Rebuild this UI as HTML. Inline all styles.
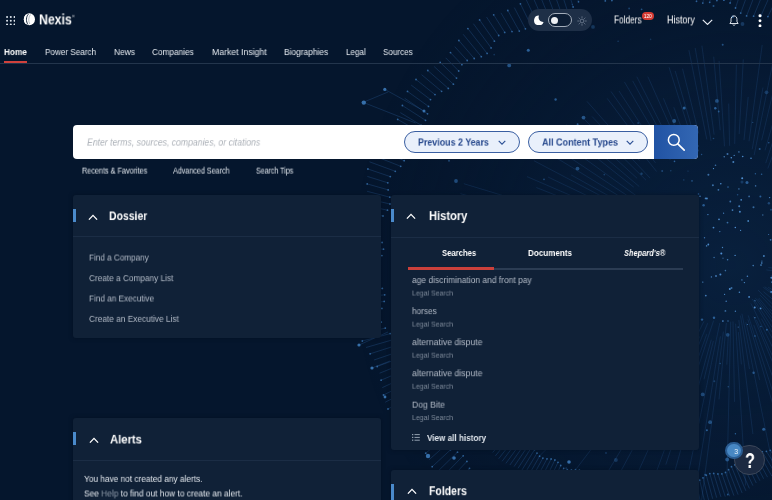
<!DOCTYPE html>
<html><head><meta charset="utf-8">
<style>
*{box-sizing:border-box;margin:0;padding:0}
html,body{width:772px;height:500px;overflow:hidden}
body{background:#05162d;font-family:"Liberation Sans",sans-serif;color:#fff;position:relative}
.a{position:absolute}
#w{position:absolute;left:0;top:0;width:772px;height:500px;overflow:hidden;filter:blur(0.35px)}
#bg{position:absolute;left:0;top:0;width:772px;height:500px}
.t{position:absolute;white-space:nowrap;line-height:1;transform-origin:0 0;will-change:transform}
.panel{position:absolute;background:#102137;border-radius:3px;box-shadow:0 0 4px rgba(4,14,28,.6)}
.bar{position:absolute;width:2.8px;height:13.2px;background:#4a8acb}
.hr{position:absolute;height:1px;background:#1b2d45}
.pill{position:absolute;height:21.6px;border:1.5px solid #3a5fa2;border-radius:11px;background:#e9f0fb}
</style></head><body>
<div id="w">
<svg id="bg" viewBox="0 0 772 500"><defs><radialGradient id="glow" cx="732" cy="265" r="380" gradientUnits="userSpaceOnUse"><stop offset="0" stop-color="#0b2748" stop-opacity="0.6"/><stop offset="0.5" stop-color="#092140" stop-opacity="0.35"/><stop offset="1" stop-color="#05162d" stop-opacity="0"/></radialGradient></defs><rect width="772" height="500" fill="url(#glow)"/><path d="M768.3 267.6L924.1 278.6M766.3 269.9L910.8 290.4M770.8 275.4L813.1 286.8M770.8 281.3L849.5 314.5M767.9 287.0L837.2 329.5M764.7 286.8L828.3 329.1M763.3 287.4L893.8 380.9M763.5 291.7L796.8 320.0M758.0 290.1L864.3 393.1M760.2 295.1L814.6 352.9M769.7 308.5L895.3 453.6M758.9 298.1L823.4 377.6M757.6 298.8L777.4 325.0M755.4 298.0L871.3 461.7M754.3 299.6L873.3 484.8M752.2 298.8L797.5 374.5M761.4 318.6L858.2 494.9M750.9 303.4L803.0 408.9M756.3 319.7L843.7 516.1M753.5 316.4L773.8 365.1M753.8 325.1L809.5 478.0M748.2 315.4L802.4 483.9M747.9 319.3L777.5 420.4M745.8 322.3L759.6 379.9M741.9 313.7L777.7 489.7M740.5 315.6L749.5 369.1M738.8 320.0L752.9 434.0M738.4 332.1L741.4 364.4M735.6 323.7L745.6 485.5M733.0 321.5L734.5 401.8M730.7 321.7L727.0 476.3M728.4 333.6L726.8 364.7M726.4 323.0L719.0 399.4M723.4 331.6L694.5 555.2M720.4 336.3L687.7 536.7M719.8 323.0L679.5 515.5M713.4 340.9L704.0 379.3M711.3 339.7L665.9 503.4M713.6 320.6L665.8 464.6M706.8 334.1L634.6 531.3M707.7 323.2L660.4 436.7M699.5 336.6L625.2 500.6M703.9 321.4L681.4 366.6M693.0 337.3L608.2 494.6M697.3 322.8L594.6 493.9M685.1 337.2L652.7 387.1M687.2 329.3L608.2 442.6M683.7 328.2L554.4 497.5M677.6 332.4L622.2 401.0M684.9 318.8L665.0 341.6M677.9 322.2L558.3 448.6M667.3 329.2L538.6 456.9M671.6 320.5L577.5 406.9M674.7 313.4L561.2 409.4M673.5 310.5L590.6 374.9M667.3 311.7L518.0 419.3M656.3 315.6L554.5 383.7M657.6 311.2L496.6 411.2M661.4 305.6L544.4 372.9M656.3 304.2L620.1 323.1M641.7 308.4L509.8 371.8M651.9 300.1L487.3 372.3M649.7 297.4L517.5 349.6M639.1 297.3L490.3 349.1M640.1 293.0L600.5 305.0M639.9 289.0L558.3 310.2M634.0 287.6L546.8 307.7M636.1 283.5L547.1 300.7M640.3 278.6L575.0 288.3M639.0 275.8L565.1 284.4M630.8 273.2L418.9 290.2M634.8 267.9L490.6 272.2M644.5 265.3L569.9 265.6M625.4 260.4L461.1 253.3M639.4 258.6L526.5 250.8M621.6 251.8L512.3 238.8M625.9 249.5L488.7 229.4M623.7 244.5L503.3 221.7M632.9 243.3L433.9 199.8M635.0 239.5L460.4 193.7M625.5 232.7L463.8 183.7M623.6 228.4L552.0 204.2M618.3 220.0L536.3 187.5M623.7 218.3L527.0 176.6M621.3 212.0L548.0 177.0M629.1 210.8L534.1 160.8M619.8 202.1L571.1 174.9M622.9 198.4L550.7 154.4M627.8 196.0L562.1 152.4M638.4 197.3L561.4 141.7M633.7 187.1L565.8 133.4M639.3 186.6L566.3 124.7M637.1 178.3L586.9 132.4M646.0 180.2L582.1 117.1M650.1 178.1L592.1 116.5M639.6 160.7L587.0 101.4M656.6 171.5L633.3 142.5M655.5 162.9L607.2 98.4M654.3 153.6L611.0 91.5M660.3 154.5L619.0 91.0M670.3 160.0L624.4 81.9M671.5 152.8L632.7 80.9M670.7 143.7L636.8 76.7M680.1 148.9L647.9 76.7M683.1 146.2L663.4 98.3M687.4 144.1L673.8 107.3M693.7 144.8L669.1 67.4M693.1 132.2L675.2 71.0M698.8 133.5L682.5 68.7M706.8 139.4L688.9 50.2M711.0 140.9L695.2 48.0M714.1 134.7L701.9 45.7M720.2 130.2L713.7 56.7M724.5 146.3L719.1 61.1M729.6 145.8L728.7 103.6M734.7 143.9L736.4 64.6M739.2 134.1L743.3 59.4M744.0 140.1L748.2 96.9M749.0 141.3L762.2 44.9M752.2 149.3L763.0 87.4M754.1 155.3L775.4 49.6M761.6 140.4L782.8 51.0M765.0 150.4L792.0 57.0M765.7 163.2L789.0 92.4M767.8 168.5L795.4 94.2" stroke="#24528c" stroke-opacity="0.45" stroke-width="0.6" fill="none"/><path d="M780.7 506.7L788.9 521.9M773.6 507.7L783.4 526.9M766.2 507.5L777.9 531.9M759.5 508.6L772.1 536.6M538.0 507.4L525.5 534.5M531.5 505.8L518.3 532.7M524.1 505.9L511.5 530.0M516.9 505.1L505.3 526.1M511.0 501.9L499.7 521.2M506.7 496.1L494.5 515.8M503.0 489.7L489.5 510.2M498.4 484.8L484.5 505.0M492.2 482.2L479.0 500.4M484.9 481.0L472.9 496.6M477.9 479.0L466.4 493.4M472.8 474.7L459.5 490.4M469.5 468.3L452.7 487.2M466.9 461.4L446.4 483.3M463.2 455.8L440.8 478.6M457.5 452.2L436.1 473.0M450.5 449.8L432.2 466.7M444.0 446.6L428.9 459.9M439.7 441.5L425.7 453.2M437.6 434.6L422.3 446.8M436.2 427.3L418.2 440.9M433.4 421.2L413.4 435.6M428.4 416.7L408.0 430.7M421.9 413.1L402.3 425.9M416.1 408.9L396.7 420.8M412.7 403.1L391.9 415.2M411.9 395.9L388.0 409.0M411.7 388.5L385.3 402.2M410.0 382.0L383.5 395.0M405.7 376.8L382.3 387.6M399.9 372.2L381.1 380.2M395.0 367.0L379.6 373.2M392.7 360.7L377.2 366.5M393.1 353.5L374.0 360.0M394.2 346.1L370.1 353.8M393.6 339.5L366.0 347.5M390.2 333.6L362.3 341.0M385.3 328.1L359.4 334.2M381.3 322.1L357.6 327.1M380.2 315.5L357.1 319.8M381.9 308.4L357.6 312.4M384.2 301.4L358.6 304.9M384.7 294.8L359.5 297.6M382.3 288.4L359.9 290.4M378.3 282.1L359.5 283.3M375.5 275.5L358.1 276.2M375.6 268.8L356.1 269.1M378.5 262.2L354.0 261.9M381.9 255.6L352.4 254.6M383.5 249.2L351.7 247.3M382.1 242.5L352.2 240.0M379.3 235.6L354.0 232.8M377.7 228.7L356.7 225.9M379.0 222.1L359.8 219.0M383.0 216.0L362.7 212.3M387.5 210.2L365.1 205.5M390.0 204.0L366.5 198.5M389.8 197.2L367.1 191.3M388.2 189.9L367.2 183.9M387.8 182.8L367.3 176.4M390.3 176.6L367.9 169.0M395.3 171.3L369.5 161.8M400.7 166.3L372.2 155.0M404.2 160.7L376.1 148.7M405.1 153.9L380.8 142.9M404.8 146.5L385.7 137.2M405.6 139.4L390.4 131.6M409.1 133.7L394.5 125.7M415.0 129.3L397.7 119.4M421.2 125.3L400.3 112.6M425.5 120.3L402.4 105.5M427.5 113.8L404.7 98.3M428.5 106.4L407.5 91.4M430.5 99.6L411.2 85.1M435.0 94.6L416.0 79.5M441.6 91.3L421.6 74.7M448.3 88.4L427.8 70.5M453.4 84.2L434.1 66.5M456.5 78.1L440.2 62.4M458.7 71.0L445.7 57.8M461.9 64.7L450.5 52.6M467.2 60.5L454.8 46.7M474.2 58.5L458.9 40.5M481.3 56.7L463.2 34.3M487.1 53.4L467.9 28.6M491.1 47.9L473.4 23.7M494.4 41.2L479.6 19.9M498.7 35.5L486.5 17.0M504.7 32.4L493.7 14.8M512.0 31.6L500.9 12.8M519.3 31.1L507.8 10.5M525.4 28.8L514.3 7.6M530.3 23.9L520.4 3.8M534.8 17.9L526.1 -0.6M540.0 13.1L531.8 -5.4M546.4 11.1L537.7 -10.1M553.7 11.6L544.0 -14.1M561.0 12.3L550.7 -17.0M567.5 11.0L557.8 -18.7M573.1 7.0L565.2 -19.4M578.5 1.8L572.7 -19.4M584.4 -2.0L580.2 -19.3M591.1 -2.7L587.4 -19.6M598.3 -1.0L594.5 -20.7M605.3 0.9L601.3 -22.7M611.9 0.6L608.2 -25.4M618.1 -2.4L615.0 -28.4M624.3 -6.5L622.0 -31.1M630.8 -9.2L629.2 -33.0M637.6 -8.8L636.4 -33.7M644.3 -5.9L643.8 -33.1M650.9 -2.8L651.0 -31.5M657.5 -2.0L658.2 -29.3M664.1 -4.0L665.3 -27.1M670.9 -7.0L672.3 -25.4M677.8 -8.5L679.4 -24.6M684.3 -6.9L686.6 -24.6M690.5 -2.8L693.9 -25.3M696.5 1.3L701.4 -26.2M702.8 3.1L708.8 -26.8M709.7 2.3L716.2 -26.4M716.9 0.5L723.3 -24.8M723.9 0.2L730.1 -22.0M730.1 3.0L736.6 -18.3M735.5 8.0L742.8 -14.1M740.7 13.1L749.0 -10.0M746.6 15.9L755.3 -6.5M753.6 16.2L761.9 -3.8M761.0 15.7L768.8 -1.9M767.9 16.6L776.1 -0.5M773.5 20.5L783.5 0.8M777.9 26.4L790.7 2.5" stroke="#2f66a3" stroke-opacity="0.5" stroke-width="0.6" fill="none"/><g fill="#3f7fc0" fill-opacity="0.7"><circle cx="780.7" cy="506.7" r="0.9"/><circle cx="788.9" cy="521.9" r="0.9"/><circle cx="773.6" cy="507.7" r="0.9"/><circle cx="766.2" cy="507.5" r="0.9"/><circle cx="777.9" cy="531.9" r="0.9"/><circle cx="759.5" cy="508.6" r="0.9"/><circle cx="538.0" cy="507.4" r="0.9"/><circle cx="525.5" cy="534.5" r="0.9"/><circle cx="531.5" cy="505.8" r="0.9"/><circle cx="524.1" cy="505.9" r="0.9"/><circle cx="511.5" cy="530.0" r="0.9"/><circle cx="516.9" cy="505.1" r="0.9"/><circle cx="511.0" cy="501.9" r="0.9"/><circle cx="499.7" cy="521.2" r="0.9"/><circle cx="506.7" cy="496.1" r="0.9"/><circle cx="503.0" cy="489.7" r="0.9"/><circle cx="489.5" cy="510.2" r="0.9"/><circle cx="498.4" cy="484.8" r="0.9"/><circle cx="492.2" cy="482.2" r="0.9"/><circle cx="479.0" cy="500.4" r="0.9"/><circle cx="484.9" cy="481.0" r="0.9"/><circle cx="477.9" cy="479.0" r="0.9"/><circle cx="466.4" cy="493.4" r="0.9"/><circle cx="472.8" cy="474.7" r="0.9"/><circle cx="469.5" cy="468.3" r="0.9"/><circle cx="452.7" cy="487.2" r="0.9"/><circle cx="466.9" cy="461.4" r="0.9"/><circle cx="463.2" cy="455.8" r="0.9"/><circle cx="440.8" cy="478.6" r="0.9"/><circle cx="457.5" cy="452.2" r="0.9"/><circle cx="450.5" cy="449.8" r="0.9"/><circle cx="432.2" cy="466.7" r="0.9"/><circle cx="444.0" cy="446.6" r="0.9"/><circle cx="439.7" cy="441.5" r="0.9"/><circle cx="425.7" cy="453.2" r="0.9"/><circle cx="437.6" cy="434.6" r="0.9"/><circle cx="436.2" cy="427.3" r="0.9"/><circle cx="418.2" cy="440.9" r="0.9"/><circle cx="433.4" cy="421.2" r="0.9"/><circle cx="428.4" cy="416.7" r="0.9"/><circle cx="408.0" cy="430.7" r="0.9"/><circle cx="421.9" cy="413.1" r="0.9"/><circle cx="416.1" cy="408.9" r="0.9"/><circle cx="396.7" cy="420.8" r="0.9"/><circle cx="412.7" cy="403.1" r="0.9"/><circle cx="411.9" cy="395.9" r="0.9"/><circle cx="388.0" cy="409.0" r="0.9"/><circle cx="411.7" cy="388.5" r="0.9"/><circle cx="410.0" cy="382.0" r="0.9"/><circle cx="383.5" cy="395.0" r="0.9"/><circle cx="405.7" cy="376.8" r="0.9"/><circle cx="399.9" cy="372.2" r="0.9"/><circle cx="381.1" cy="380.2" r="0.9"/><circle cx="395.0" cy="367.0" r="0.9"/><circle cx="392.7" cy="360.7" r="0.9"/><circle cx="377.2" cy="366.5" r="0.9"/><circle cx="393.1" cy="353.5" r="0.9"/><circle cx="394.2" cy="346.1" r="0.9"/><circle cx="370.1" cy="353.8" r="0.9"/><circle cx="393.6" cy="339.5" r="0.9"/><circle cx="390.2" cy="333.6" r="0.9"/><circle cx="362.3" cy="341.0" r="0.9"/><circle cx="385.3" cy="328.1" r="0.9"/><circle cx="381.3" cy="322.1" r="0.9"/><circle cx="357.6" cy="327.1" r="0.9"/><circle cx="380.2" cy="315.5" r="0.9"/><circle cx="381.9" cy="308.4" r="0.9"/><circle cx="357.6" cy="312.4" r="0.9"/><circle cx="384.2" cy="301.4" r="0.9"/><circle cx="384.7" cy="294.8" r="0.9"/><circle cx="359.5" cy="297.6" r="0.9"/><circle cx="382.3" cy="288.4" r="0.9"/><circle cx="378.3" cy="282.1" r="0.9"/><circle cx="359.5" cy="283.3" r="0.9"/><circle cx="375.5" cy="275.5" r="0.9"/><circle cx="375.6" cy="268.8" r="0.9"/><circle cx="356.1" cy="269.1" r="0.9"/><circle cx="378.5" cy="262.2" r="0.9"/><circle cx="381.9" cy="255.6" r="0.9"/><circle cx="352.4" cy="254.6" r="0.9"/><circle cx="383.5" cy="249.2" r="0.9"/><circle cx="382.1" cy="242.5" r="0.9"/><circle cx="352.2" cy="240.0" r="0.9"/><circle cx="379.3" cy="235.6" r="0.9"/><circle cx="377.7" cy="228.7" r="0.9"/><circle cx="356.7" cy="225.9" r="0.9"/><circle cx="379.0" cy="222.1" r="0.9"/><circle cx="383.0" cy="216.0" r="0.9"/><circle cx="362.7" cy="212.3" r="0.9"/><circle cx="387.5" cy="210.2" r="0.9"/><circle cx="390.0" cy="204.0" r="0.9"/><circle cx="366.5" cy="198.5" r="0.9"/><circle cx="389.8" cy="197.2" r="0.9"/><circle cx="388.2" cy="189.9" r="0.9"/><circle cx="367.2" cy="183.9" r="0.9"/><circle cx="387.8" cy="182.8" r="0.9"/><circle cx="390.3" cy="176.6" r="0.9"/><circle cx="367.9" cy="169.0" r="0.9"/><circle cx="395.3" cy="171.3" r="0.9"/><circle cx="400.7" cy="166.3" r="0.9"/><circle cx="372.2" cy="155.0" r="0.9"/><circle cx="404.2" cy="160.7" r="0.9"/><circle cx="405.1" cy="153.9" r="0.9"/><circle cx="380.8" cy="142.9" r="0.9"/><circle cx="404.8" cy="146.5" r="0.9"/><circle cx="405.6" cy="139.4" r="0.9"/><circle cx="390.4" cy="131.6" r="0.9"/><circle cx="409.1" cy="133.7" r="0.9"/><circle cx="415.0" cy="129.3" r="0.9"/><circle cx="397.7" cy="119.4" r="0.9"/><circle cx="421.2" cy="125.3" r="0.9"/><circle cx="425.5" cy="120.3" r="0.9"/><circle cx="402.4" cy="105.5" r="0.9"/><circle cx="427.5" cy="113.8" r="0.9"/><circle cx="428.5" cy="106.4" r="0.9"/><circle cx="407.5" cy="91.4" r="0.9"/><circle cx="430.5" cy="99.6" r="0.9"/><circle cx="435.0" cy="94.6" r="0.9"/><circle cx="416.0" cy="79.5" r="0.9"/><circle cx="441.6" cy="91.3" r="0.9"/><circle cx="448.3" cy="88.4" r="0.9"/><circle cx="427.8" cy="70.5" r="0.9"/><circle cx="453.4" cy="84.2" r="0.9"/><circle cx="456.5" cy="78.1" r="0.9"/><circle cx="440.2" cy="62.4" r="0.9"/><circle cx="458.7" cy="71.0" r="0.9"/><circle cx="461.9" cy="64.7" r="0.9"/><circle cx="450.5" cy="52.6" r="0.9"/><circle cx="467.2" cy="60.5" r="0.9"/><circle cx="474.2" cy="58.5" r="0.9"/><circle cx="458.9" cy="40.5" r="0.9"/><circle cx="481.3" cy="56.7" r="0.9"/><circle cx="487.1" cy="53.4" r="0.9"/><circle cx="467.9" cy="28.6" r="0.9"/><circle cx="491.1" cy="47.9" r="0.9"/><circle cx="494.4" cy="41.2" r="0.9"/><circle cx="479.6" cy="19.9" r="0.9"/><circle cx="498.7" cy="35.5" r="0.9"/><circle cx="504.7" cy="32.4" r="0.9"/><circle cx="493.7" cy="14.8" r="0.9"/><circle cx="512.0" cy="31.6" r="0.9"/><circle cx="519.3" cy="31.1" r="0.9"/><circle cx="507.8" cy="10.5" r="0.9"/><circle cx="525.4" cy="28.8" r="0.9"/><circle cx="530.3" cy="23.9" r="0.9"/><circle cx="520.4" cy="3.8" r="0.9"/><circle cx="534.8" cy="17.9" r="0.9"/><circle cx="540.0" cy="13.1" r="0.9"/><circle cx="531.8" cy="-5.4" r="0.9"/><circle cx="546.4" cy="11.1" r="0.9"/><circle cx="553.7" cy="11.6" r="0.9"/><circle cx="544.0" cy="-14.1" r="0.9"/><circle cx="561.0" cy="12.3" r="0.9"/><circle cx="567.5" cy="11.0" r="0.9"/><circle cx="557.8" cy="-18.7" r="0.9"/><circle cx="573.1" cy="7.0" r="0.9"/><circle cx="578.5" cy="1.8" r="0.9"/><circle cx="572.7" cy="-19.4" r="0.9"/><circle cx="584.4" cy="-2.0" r="0.9"/><circle cx="591.1" cy="-2.7" r="0.9"/><circle cx="587.4" cy="-19.6" r="0.9"/><circle cx="598.3" cy="-1.0" r="0.9"/><circle cx="605.3" cy="0.9" r="0.9"/><circle cx="601.3" cy="-22.7" r="0.9"/><circle cx="611.9" cy="0.6" r="0.9"/><circle cx="618.1" cy="-2.4" r="0.9"/><circle cx="615.0" cy="-28.4" r="0.9"/><circle cx="624.3" cy="-6.5" r="0.9"/><circle cx="630.8" cy="-9.2" r="0.9"/><circle cx="629.2" cy="-33.0" r="0.9"/><circle cx="637.6" cy="-8.8" r="0.9"/><circle cx="644.3" cy="-5.9" r="0.9"/><circle cx="643.8" cy="-33.1" r="0.9"/><circle cx="650.9" cy="-2.8" r="0.9"/><circle cx="657.5" cy="-2.0" r="0.9"/><circle cx="658.2" cy="-29.3" r="0.9"/><circle cx="664.1" cy="-4.0" r="0.9"/><circle cx="670.9" cy="-7.0" r="0.9"/><circle cx="672.3" cy="-25.4" r="0.9"/><circle cx="677.8" cy="-8.5" r="0.9"/><circle cx="684.3" cy="-6.9" r="0.9"/><circle cx="686.6" cy="-24.6" r="0.9"/><circle cx="690.5" cy="-2.8" r="0.9"/><circle cx="696.5" cy="1.3" r="0.9"/><circle cx="701.4" cy="-26.2" r="0.9"/><circle cx="702.8" cy="3.1" r="0.9"/><circle cx="709.7" cy="2.3" r="0.9"/><circle cx="716.2" cy="-26.4" r="0.9"/><circle cx="716.9" cy="0.5" r="0.9"/><circle cx="723.9" cy="0.2" r="0.9"/><circle cx="730.1" cy="-22.0" r="0.9"/><circle cx="730.1" cy="3.0" r="0.9"/><circle cx="735.5" cy="8.0" r="0.9"/><circle cx="742.8" cy="-14.1" r="0.9"/><circle cx="740.7" cy="13.1" r="0.9"/><circle cx="746.6" cy="15.9" r="0.9"/><circle cx="755.3" cy="-6.5" r="0.9"/><circle cx="753.6" cy="16.2" r="0.9"/><circle cx="761.0" cy="15.7" r="0.9"/><circle cx="768.8" cy="-1.9" r="0.9"/><circle cx="767.9" cy="16.6" r="0.9"/><circle cx="773.5" cy="20.5" r="0.9"/><circle cx="783.5" cy="0.8" r="0.9"/><circle cx="777.9" cy="26.4" r="0.9"/></g><path d="M780.6 438.3L796.4 459.3M777.9 441.0L793.6 462.7M775.7 444.5L790.7 465.9M773.4 447.9L787.5 468.8M770.3 450.3L784.0 471.3M766.4 451.3L780.1 473.2M762.3 451.8L776.0 474.7M758.5 452.9L771.8 476.0M755.5 455.3L767.6 477.2M752.9 458.5L763.7 478.8M750.2 461.6L759.9 480.7M746.8 463.5L756.3 483.0M742.8 464.1L752.9 485.6M738.6 464.1L749.4 488.4M734.8 464.8L745.9 490.9M731.5 466.7L742.1 493.0M728.6 469.7L738.1 494.6M725.5 472.4L733.9 495.6M721.9 473.8L729.6 496.2M717.9 473.9L725.2 496.5M713.7 473.4L720.9 496.9M709.8 473.6L716.7 497.7M706.3 475.2L712.7 498.8M703.0 477.8L708.7 500.4M699.7 480.1L704.8 502.3M695.9 481.0L700.9 504.3M691.9 480.6L696.8 506.0M687.8 479.6L692.7 507.2M683.9 479.3L688.5 507.9M680.3 480.5L684.1 507.9M676.7 482.7L679.8 507.5M673.1 484.5L675.4 507.0M669.2 485.0L671.1 506.5M665.3 484.0L666.9 506.4M661.4 482.6L662.7 506.8M657.6 481.9L658.5 507.6M653.8 482.6L654.3 508.7M650.0 484.3L650.0 509.8M646.1 485.7L645.7 510.6M642.3 485.7L641.4 510.8M638.5 484.2L637.1 510.5M634.8 482.3L632.9 509.6M631.1 481.2L628.7 508.3M627.2 481.5L624.6 506.8M623.3 482.7L620.5 505.5M619.3 483.6L616.3 504.6M615.5 483.1L612.1 504.2M611.9 481.2L607.8 504.2M608.4 478.8L603.5 504.4M604.9 477.3L599.1 504.6M601.0 477.1L594.7 504.4M596.9 477.9L590.5 503.7M592.9 478.3L586.4 502.4M589.1 477.3L582.5 500.5M585.8 474.9L578.7 498.4M582.7 472.1L574.9 496.1M579.4 470.2L571.1 494.1M575.5 469.6L567.2 492.4M571.4 469.9L563.2 491.2M567.3 469.7L559.0 490.3M563.7 468.3L554.6 489.6M560.7 465.5L550.3 488.9M558.0 462.3L546.1 487.7M554.9 460.0L542.2 486.1M551.1 459.0L538.5 483.9M547.0 458.8L535.0 481.2M542.9 458.1L531.8 478.3M539.6 456.2L528.6 475.3M537.0 453.1L525.3 472.6M534.6 449.6L521.8 470.2M531.8 447.0L518.0 468.3M528.2 445.6L514.0 466.6M524.1 444.8L509.9 465.0M520.2 443.7L505.9 463.4M517.1 441.3L502.1 461.3M514.9 437.9L498.6 458.8M513.0 434.2L495.4 455.9M510.5 431.2L492.7 452.5M507.1 429.4L490.1 448.9M503.1 428.1L487.6 445.4M499.4 426.5L484.9 442.1M496.6 423.8L481.9 439.1M494.9 420.1L478.6 436.4M493.4 416.2L475.0 434.0M491.3 413.0L471.3 431.6M488.1 410.8L467.7 429.1M484.3 409.0L464.4 426.3M480.8 407.0L461.6 423.1M478.5 403.9L459.2 419.5M477.2 400.0L457.2 415.6M476.2 396.0L455.5 411.6M474.4 392.6L453.7 407.6M471.5 390.0L451.7 403.9M467.9 387.8L449.3 400.4M464.8 385.3L446.6 397.1M462.8 382.0L443.5 394.0M462.0 377.9L440.4 390.9M461.5 373.8L437.5 387.7M460.2 370.2L434.9 384.2M457.6 367.3L432.9 380.5M454.3 364.7L431.4 376.4M451.5 361.8L430.3 372.2M450.0 358.3L429.4 367.9M449.7 354.2L428.4 363.6M449.7 350.0L427.2 359.6M448.8 346.3L425.5 355.7M446.5 343.1L423.4 352.0M443.6 340.1L421.1 348.3M441.1 336.9L418.7 344.7M440.1 333.2L416.5 340.9M440.4 329.1L414.8 336.9M440.9 325.0L413.6 332.8M440.4 321.2L413.1 328.5M438.5 317.7L412.9 324.1M435.9 314.4L413.0 319.7M433.9 310.9L412.9 315.4M433.4 307.1L412.4 311.2" stroke="#2f66a3" stroke-opacity="0.5" stroke-width="0.6" fill="none"/><g fill="#3f7fc0" fill-opacity="0.7"><circle cx="780.6" cy="438.3" r="0.9"/><circle cx="777.9" cy="441.0" r="0.9"/><circle cx="775.7" cy="444.5" r="0.9"/><circle cx="773.4" cy="447.9" r="0.9"/><circle cx="770.3" cy="450.3" r="0.9"/><circle cx="766.4" cy="451.3" r="0.9"/><circle cx="762.3" cy="451.8" r="0.9"/><circle cx="758.5" cy="452.9" r="0.9"/><circle cx="755.5" cy="455.3" r="0.9"/><circle cx="752.9" cy="458.5" r="0.9"/><circle cx="750.2" cy="461.6" r="0.9"/><circle cx="746.8" cy="463.5" r="0.9"/><circle cx="742.8" cy="464.1" r="0.9"/><circle cx="738.6" cy="464.1" r="0.9"/><circle cx="734.8" cy="464.8" r="0.9"/><circle cx="731.5" cy="466.7" r="0.9"/><circle cx="728.6" cy="469.7" r="0.9"/><circle cx="725.5" cy="472.4" r="0.9"/><circle cx="721.9" cy="473.8" r="0.9"/><circle cx="717.9" cy="473.9" r="0.9"/><circle cx="713.7" cy="473.4" r="0.9"/><circle cx="709.8" cy="473.6" r="0.9"/><circle cx="706.3" cy="475.2" r="0.9"/><circle cx="703.0" cy="477.8" r="0.9"/><circle cx="699.7" cy="480.1" r="0.9"/><circle cx="695.9" cy="481.0" r="0.9"/><circle cx="691.9" cy="480.6" r="0.9"/><circle cx="687.8" cy="479.6" r="0.9"/><circle cx="683.9" cy="479.3" r="0.9"/><circle cx="680.3" cy="480.5" r="0.9"/><circle cx="676.7" cy="482.7" r="0.9"/><circle cx="673.1" cy="484.5" r="0.9"/><circle cx="669.2" cy="485.0" r="0.9"/><circle cx="665.3" cy="484.0" r="0.9"/><circle cx="661.4" cy="482.6" r="0.9"/><circle cx="657.6" cy="481.9" r="0.9"/><circle cx="653.8" cy="482.6" r="0.9"/><circle cx="650.0" cy="484.3" r="0.9"/><circle cx="646.1" cy="485.7" r="0.9"/><circle cx="642.3" cy="485.7" r="0.9"/><circle cx="638.5" cy="484.2" r="0.9"/><circle cx="634.8" cy="482.3" r="0.9"/><circle cx="631.1" cy="481.2" r="0.9"/><circle cx="627.2" cy="481.5" r="0.9"/><circle cx="623.3" cy="482.7" r="0.9"/><circle cx="619.3" cy="483.6" r="0.9"/><circle cx="615.5" cy="483.1" r="0.9"/><circle cx="611.9" cy="481.2" r="0.9"/><circle cx="608.4" cy="478.8" r="0.9"/><circle cx="604.9" cy="477.3" r="0.9"/><circle cx="601.0" cy="477.1" r="0.9"/><circle cx="596.9" cy="477.9" r="0.9"/><circle cx="592.9" cy="478.3" r="0.9"/><circle cx="589.1" cy="477.3" r="0.9"/><circle cx="585.8" cy="474.9" r="0.9"/><circle cx="582.7" cy="472.1" r="0.9"/><circle cx="579.4" cy="470.2" r="0.9"/><circle cx="575.5" cy="469.6" r="0.9"/><circle cx="571.4" cy="469.9" r="0.9"/><circle cx="567.3" cy="469.7" r="0.9"/><circle cx="563.7" cy="468.3" r="0.9"/><circle cx="560.7" cy="465.5" r="0.9"/><circle cx="558.0" cy="462.3" r="0.9"/><circle cx="554.9" cy="460.0" r="0.9"/><circle cx="551.1" cy="459.0" r="0.9"/><circle cx="547.0" cy="458.8" r="0.9"/><circle cx="542.9" cy="458.1" r="0.9"/><circle cx="539.6" cy="456.2" r="0.9"/><circle cx="537.0" cy="453.1" r="0.9"/><circle cx="534.6" cy="449.6" r="0.9"/><circle cx="531.8" cy="447.0" r="0.9"/><circle cx="528.2" cy="445.6" r="0.9"/><circle cx="524.1" cy="444.8" r="0.9"/><circle cx="520.2" cy="443.7" r="0.9"/><circle cx="517.1" cy="441.3" r="0.9"/><circle cx="514.9" cy="437.9" r="0.9"/><circle cx="513.0" cy="434.2" r="0.9"/><circle cx="510.5" cy="431.2" r="0.9"/><circle cx="507.1" cy="429.4" r="0.9"/><circle cx="503.1" cy="428.1" r="0.9"/><circle cx="499.4" cy="426.5" r="0.9"/><circle cx="496.6" cy="423.8" r="0.9"/><circle cx="494.9" cy="420.1" r="0.9"/><circle cx="493.4" cy="416.2" r="0.9"/><circle cx="491.3" cy="413.0" r="0.9"/><circle cx="488.1" cy="410.8" r="0.9"/><circle cx="484.3" cy="409.0" r="0.9"/><circle cx="480.8" cy="407.0" r="0.9"/><circle cx="478.5" cy="403.9" r="0.9"/><circle cx="477.2" cy="400.0" r="0.9"/><circle cx="476.2" cy="396.0" r="0.9"/><circle cx="474.4" cy="392.6" r="0.9"/><circle cx="471.5" cy="390.0" r="0.9"/><circle cx="467.9" cy="387.8" r="0.9"/><circle cx="464.8" cy="385.3" r="0.9"/><circle cx="462.8" cy="382.0" r="0.9"/><circle cx="462.0" cy="377.9" r="0.9"/><circle cx="461.5" cy="373.8" r="0.9"/><circle cx="460.2" cy="370.2" r="0.9"/><circle cx="457.6" cy="367.3" r="0.9"/><circle cx="454.3" cy="364.7" r="0.9"/><circle cx="451.5" cy="361.8" r="0.9"/><circle cx="450.0" cy="358.3" r="0.9"/><circle cx="449.7" cy="354.2" r="0.9"/><circle cx="449.7" cy="350.0" r="0.9"/><circle cx="448.8" cy="346.3" r="0.9"/><circle cx="446.5" cy="343.1" r="0.9"/><circle cx="443.6" cy="340.1" r="0.9"/><circle cx="441.1" cy="336.9" r="0.9"/><circle cx="440.1" cy="333.2" r="0.9"/><circle cx="440.4" cy="329.1" r="0.9"/><circle cx="440.9" cy="325.0" r="0.9"/><circle cx="440.4" cy="321.2" r="0.9"/><circle cx="438.5" cy="317.7" r="0.9"/><circle cx="435.9" cy="314.4" r="0.9"/><circle cx="433.9" cy="310.9" r="0.9"/><circle cx="433.4" cy="307.1" r="0.9"/></g><g fill="#5598dc"><circle cx="722.5" cy="247.5" r="0.7" fill-opacity="0.82"/><circle cx="713.5" cy="168.6" r="0.6" fill-opacity="1.00"/><circle cx="731.3" cy="157.7" r="0.8" fill-opacity="0.95"/><circle cx="702.8" cy="282.1" r="0.7" fill-opacity="0.86"/><circle cx="723.0" cy="258.2" r="0.6" fill-opacity="0.64"/><circle cx="739.9" cy="211.8" r="1.0" fill-opacity="0.83"/><circle cx="714.1" cy="257.5" r="0.8" fill-opacity="0.61"/><circle cx="749.1" cy="296.9" r="0.9" fill-opacity="0.93"/><circle cx="716.0" cy="276.0" r="1.0" fill-opacity="0.69"/><circle cx="726.2" cy="301.2" r="0.8" fill-opacity="0.72"/><circle cx="695.4" cy="243.9" r="0.9" fill-opacity="0.95"/><circle cx="747.4" cy="324.5" r="0.6" fill-opacity="0.68"/><circle cx="749.1" cy="196.4" r="0.9" fill-opacity="0.61"/><circle cx="712.9" cy="185.2" r="1.0" fill-opacity="0.68"/><circle cx="723.6" cy="213.2" r="0.6" fill-opacity="0.86"/><circle cx="722.9" cy="321.1" r="0.8" fill-opacity="0.95"/><circle cx="732.5" cy="210.1" r="0.9" fill-opacity="0.77"/><circle cx="754.9" cy="317.7" r="0.6" fill-opacity="0.88"/><circle cx="741.9" cy="279.9" r="0.7" fill-opacity="0.80"/><circle cx="729.8" cy="289.1" r="1.0" fill-opacity="0.95"/><circle cx="719.0" cy="219.4" r="0.8" fill-opacity="0.96"/><circle cx="744.4" cy="282.6" r="0.7" fill-opacity="0.86"/><circle cx="771.2" cy="291.9" r="0.9" fill-opacity="0.97"/><circle cx="771.8" cy="282.2" r="0.6" fill-opacity="0.84"/><circle cx="731.5" cy="288.0" r="1.0" fill-opacity="0.63"/><circle cx="728.0" cy="321.0" r="0.7" fill-opacity="0.67"/><circle cx="735.3" cy="227.5" r="0.7" fill-opacity="1.00"/><circle cx="763.9" cy="256.1" r="1.0" fill-opacity="0.75"/><circle cx="762.8" cy="215.0" r="0.7" fill-opacity="0.63"/><circle cx="742.7" cy="156.5" r="0.8" fill-opacity="0.86"/><circle cx="742.2" cy="178.3" r="1.0" fill-opacity="0.93"/><circle cx="708.4" cy="174.7" r="1.0" fill-opacity="0.67"/><circle cx="739.2" cy="206.3" r="1.0" fill-opacity="0.77"/><circle cx="720.8" cy="183.7" r="0.8" fill-opacity="0.91"/><circle cx="741.2" cy="199.8" r="0.9" fill-opacity="0.82"/><circle cx="755.6" cy="185.9" r="0.8" fill-opacity="0.61"/><circle cx="706.9" cy="198.5" r="1.0" fill-opacity="0.78"/><circle cx="753.5" cy="207.2" r="1.0" fill-opacity="0.61"/><circle cx="708.3" cy="244.5" r="0.9" fill-opacity="0.89"/><circle cx="740.6" cy="230.3" r="0.6" fill-opacity="0.96"/><circle cx="707.9" cy="214.6" r="0.7" fill-opacity="0.85"/><circle cx="761.8" cy="263.0" r="0.8" fill-opacity="0.93"/><circle cx="733.3" cy="161.9" r="1.0" fill-opacity="0.80"/><circle cx="718.4" cy="189.8" r="0.9" fill-opacity="0.70"/><circle cx="754.7" cy="307.5" r="1.0" fill-opacity="0.91"/><circle cx="761.0" cy="265.1" r="0.8" fill-opacity="0.88"/><circle cx="724.2" cy="156.8" r="0.7" fill-opacity="0.80"/><circle cx="738.9" cy="151.9" r="0.7" fill-opacity="0.90"/><circle cx="694.7" cy="230.6" r="0.6" fill-opacity="0.70"/><circle cx="748.2" cy="221.0" r="0.9" fill-opacity="0.82"/><circle cx="696.0" cy="258.6" r="0.6" fill-opacity="0.87"/><circle cx="727.5" cy="154.1" r="1.0" fill-opacity="0.69"/><circle cx="735.4" cy="311.3" r="0.7" fill-opacity="0.77"/><circle cx="753.2" cy="265.6" r="0.8" fill-opacity="0.73"/><circle cx="768.6" cy="234.5" r="0.6" fill-opacity="0.66"/><circle cx="700.0" cy="196.2" r="0.8" fill-opacity="0.83"/><circle cx="769.6" cy="197.6" r="0.7" fill-opacity="0.79"/><circle cx="705.8" cy="295.6" r="0.9" fill-opacity="0.75"/><circle cx="761.9" cy="261.1" r="0.7" fill-opacity="0.67"/><circle cx="719.8" cy="231.6" r="0.7" fill-opacity="0.76"/><circle cx="705.6" cy="198.4" r="0.9" fill-opacity="0.78"/><circle cx="770.6" cy="239.8" r="0.9" fill-opacity="0.68"/><circle cx="727.6" cy="259.7" r="0.8" fill-opacity="0.75"/><circle cx="735.1" cy="255.4" r="0.7" fill-opacity="0.90"/><circle cx="704.5" cy="237.7" r="0.7" fill-opacity="0.71"/><circle cx="725.4" cy="270.6" r="0.8" fill-opacity="0.65"/><circle cx="738.2" cy="327.1" r="0.6" fill-opacity="0.61"/><circle cx="724.6" cy="294.3" r="0.6" fill-opacity="0.94"/><circle cx="720.4" cy="274.6" r="1.0" fill-opacity="0.87"/><circle cx="725.4" cy="310.9" r="0.9" fill-opacity="0.62"/><circle cx="754.9" cy="300.7" r="0.6" fill-opacity="0.68"/><circle cx="711.4" cy="276.9" r="0.7" fill-opacity="0.81"/><circle cx="713.5" cy="227.6" r="0.9" fill-opacity="0.87"/><circle cx="747.4" cy="276.2" r="0.8" fill-opacity="0.81"/><circle cx="721.3" cy="253.6" r="1.0" fill-opacity="0.95"/><circle cx="739.4" cy="292.2" r="0.8" fill-opacity="0.84"/><circle cx="760.6" cy="308.4" r="0.9" fill-opacity="0.83"/><circle cx="751.0" cy="158.3" r="0.8" fill-opacity="0.86"/><circle cx="771.4" cy="277.7" r="1.0" fill-opacity="0.88"/><circle cx="715.5" cy="165.2" r="0.8" fill-opacity="0.69"/><circle cx="727.5" cy="222.6" r="0.9" fill-opacity="0.65"/><circle cx="706.6" cy="245.9" r="0.8" fill-opacity="0.71"/><circle cx="730.3" cy="201.5" r="0.9" fill-opacity="0.68"/><circle cx="738.9" cy="188.9" r="0.7" fill-opacity="0.81"/><circle cx="734.2" cy="155.4" r="0.7" fill-opacity="0.79"/></g><g fill="#3573b3"><circle cx="710.1" cy="422.2" r="1.9" fill-opacity="0.59"/><circle cx="590.2" cy="293.0" r="0.9" fill-opacity="0.34"/><circle cx="636.4" cy="362.7" r="1.9" fill-opacity="0.63"/><circle cx="494.2" cy="54.6" r="0.9" fill-opacity="0.32"/><circle cx="701.6" cy="154.5" r="0.7" fill-opacity="0.61"/><circle cx="610.1" cy="149.4" r="1.0" fill-opacity="0.33"/><circle cx="427.2" cy="364.9" r="1.0" fill-opacity="0.32"/><circle cx="676.5" cy="408.8" r="0.7" fill-opacity="0.37"/><circle cx="681.2" cy="156.8" r="0.7" fill-opacity="0.76"/><circle cx="456.0" cy="181.0" r="1.9" fill-opacity="0.57"/><circle cx="583.5" cy="117.6" r="1.9" fill-opacity="0.65"/><circle cx="768.8" cy="142.8" r="0.7" fill-opacity="0.74"/><circle cx="634.4" cy="497.2" r="1.5" fill-opacity="0.50"/><circle cx="629.1" cy="8.5" r="0.9" fill-opacity="0.48"/><circle cx="614.5" cy="239.5" r="0.8" fill-opacity="0.48"/><circle cx="703.6" cy="205.3" r="1.2" fill-opacity="0.73"/><circle cx="727.2" cy="459.5" r="1.9" fill-opacity="0.65"/><circle cx="727.8" cy="494.5" r="0.9" fill-opacity="0.66"/><circle cx="663.8" cy="395.0" r="1.9" fill-opacity="0.40"/><circle cx="648.6" cy="229.7" r="1.0" fill-opacity="0.62"/><circle cx="720.2" cy="363.5" r="0.8" fill-opacity="0.49"/><circle cx="674.5" cy="161.4" r="0.8" fill-opacity="0.79"/><circle cx="490.0" cy="308.3" r="1.9" fill-opacity="0.79"/><circle cx="532.1" cy="376.0" r="1.0" fill-opacity="0.49"/><circle cx="692.0" cy="180.9" r="0.8" fill-opacity="0.66"/><circle cx="702.0" cy="319.6" r="1.2" fill-opacity="0.73"/><circle cx="766.9" cy="329.7" r="1.0" fill-opacity="0.70"/><circle cx="557.2" cy="406.5" r="1.9" fill-opacity="0.37"/><circle cx="518.6" cy="153.9" r="0.8" fill-opacity="0.57"/><circle cx="761.6" cy="174.3" r="0.8" fill-opacity="0.72"/><circle cx="449.0" cy="160.7" r="1.0" fill-opacity="0.52"/><circle cx="705.2" cy="474.7" r="0.9" fill-opacity="0.61"/><circle cx="714.3" cy="381.2" r="1.0" fill-opacity="0.40"/><circle cx="534.1" cy="198.7" r="0.8" fill-opacity="0.33"/><circle cx="404.6" cy="299.2" r="0.8" fill-opacity="0.80"/><circle cx="678.4" cy="299.7" r="0.9" fill-opacity="0.70"/><circle cx="675.8" cy="308.1" r="1.2" fill-opacity="0.61"/><circle cx="449.2" cy="129.2" r="0.7" fill-opacity="0.39"/><circle cx="566.2" cy="468.2" r="0.9" fill-opacity="0.33"/><circle cx="440.1" cy="328.6" r="0.7" fill-opacity="0.78"/><circle cx="716.9" cy="100.9" r="1.9" fill-opacity="0.57"/><circle cx="593.0" cy="26.9" r="1.9" fill-opacity="0.35"/><circle cx="697.6" cy="146.0" r="1.2" fill-opacity="0.31"/><circle cx="627.9" cy="210.5" r="1.0" fill-opacity="0.66"/><circle cx="601.0" cy="259.9" r="0.9" fill-opacity="0.61"/><circle cx="598.1" cy="308.7" r="0.7" fill-opacity="0.75"/><circle cx="696.8" cy="337.8" r="0.9" fill-opacity="0.41"/><circle cx="760.9" cy="326.5" r="0.8" fill-opacity="0.57"/><circle cx="688.0" cy="171.1" r="0.7" fill-opacity="0.38"/><circle cx="658.7" cy="340.4" r="0.7" fill-opacity="0.30"/><circle cx="566.1" cy="262.3" r="0.9" fill-opacity="0.78"/><circle cx="605.8" cy="196.9" r="1.0" fill-opacity="0.78"/><circle cx="763.7" cy="429.2" r="1.5" fill-opacity="0.74"/><circle cx="760.4" cy="196.4" r="1.0" fill-opacity="0.77"/><circle cx="685.8" cy="359.8" r="0.9" fill-opacity="0.56"/><circle cx="572.3" cy="4.5" r="0.7" fill-opacity="0.41"/><circle cx="509.2" cy="65.4" r="1.9" fill-opacity="0.66"/><circle cx="446.4" cy="412.8" r="0.7" fill-opacity="0.36"/><circle cx="713.5" cy="6.0" r="1.0" fill-opacity="0.63"/><circle cx="591.4" cy="343.0" r="0.8" fill-opacity="0.49"/><circle cx="667.5" cy="247.9" r="0.7" fill-opacity="0.56"/><circle cx="604.9" cy="304.8" r="0.7" fill-opacity="0.60"/><circle cx="410.3" cy="329.1" r="1.5" fill-opacity="0.61"/><circle cx="666.2" cy="242.8" r="0.8" fill-opacity="0.68"/><circle cx="755.4" cy="173.8" r="0.7" fill-opacity="0.70"/><circle cx="404.6" cy="241.1" r="0.7" fill-opacity="0.39"/><circle cx="582.0" cy="248.3" r="0.8" fill-opacity="0.57"/><circle cx="689.1" cy="493.0" r="0.7" fill-opacity="0.35"/><circle cx="487.0" cy="361.1" r="0.8" fill-opacity="0.34"/><circle cx="661.6" cy="266.5" r="1.9" fill-opacity="0.57"/><circle cx="528.3" cy="50.2" r="1.5" fill-opacity="0.79"/><circle cx="426.6" cy="144.1" r="1.0" fill-opacity="0.31"/><circle cx="656.4" cy="384.9" r="1.5" fill-opacity="0.77"/><circle cx="670.8" cy="170.8" r="0.8" fill-opacity="0.39"/><circle cx="643.5" cy="283.9" r="0.7" fill-opacity="0.43"/><circle cx="606.0" cy="452.9" r="0.9" fill-opacity="0.40"/><circle cx="718.7" cy="111.5" r="0.9" fill-opacity="0.68"/><circle cx="755.0" cy="336.0" r="0.9" fill-opacity="0.51"/><circle cx="544.8" cy="317.1" r="0.7" fill-opacity="0.47"/><circle cx="697.6" cy="150.4" r="1.2" fill-opacity="0.36"/><circle cx="662.2" cy="171.0" r="1.0" fill-opacity="0.49"/><circle cx="722.7" cy="44.8" r="1.0" fill-opacity="0.62"/><circle cx="633.6" cy="373.7" r="1.2" fill-opacity="0.52"/><circle cx="650.6" cy="39.4" r="0.8" fill-opacity="0.31"/><circle cx="577.9" cy="419.4" r="1.9" fill-opacity="0.43"/><circle cx="601.2" cy="336.2" r="1.9" fill-opacity="0.74"/><circle cx="742.0" cy="181.9" r="1.5" fill-opacity="0.35"/><circle cx="628.6" cy="384.4" r="1.5" fill-opacity="0.60"/><circle cx="683.8" cy="179.9" r="0.7" fill-opacity="0.48"/><circle cx="593.5" cy="296.1" r="1.5" fill-opacity="0.63"/><circle cx="624.0" cy="313.1" r="1.2" fill-opacity="0.65"/><circle cx="571.3" cy="303.9" r="1.5" fill-opacity="0.77"/><circle cx="517.7" cy="240.9" r="1.0" fill-opacity="0.48"/><circle cx="728.0" cy="187.1" r="0.8" fill-opacity="0.78"/><circle cx="641.6" cy="9.3" r="0.9" fill-opacity="0.63"/><circle cx="542.7" cy="476.5" r="0.7" fill-opacity="0.35"/><circle cx="553.2" cy="373.9" r="0.7" fill-opacity="0.69"/><circle cx="664.2" cy="236.2" r="0.8" fill-opacity="0.36"/><circle cx="735.4" cy="433.8" r="0.7" fill-opacity="0.79"/><circle cx="645.7" cy="211.1" r="0.7" fill-opacity="0.53"/><circle cx="546.1" cy="388.9" r="1.9" fill-opacity="0.66"/><circle cx="635.0" cy="360.1" r="1.2" fill-opacity="0.31"/><circle cx="771.0" cy="209.7" r="1.0" fill-opacity="0.45"/><circle cx="638.2" cy="122.9" r="1.0" fill-opacity="0.40"/><circle cx="641.5" cy="173.7" r="1.2" fill-opacity="0.43"/><circle cx="615.3" cy="392.7" r="1.0" fill-opacity="0.49"/><circle cx="644.8" cy="146.9" r="0.7" fill-opacity="0.32"/><circle cx="768.9" cy="203.2" r="1.2" fill-opacity="0.49"/><circle cx="618.1" cy="41.2" r="0.7" fill-opacity="0.46"/><circle cx="614.3" cy="276.9" r="1.5" fill-opacity="0.56"/><circle cx="715.3" cy="108.2" r="1.2" fill-opacity="0.78"/><circle cx="604.3" cy="174.6" r="0.9" fill-opacity="0.40"/><circle cx="737.6" cy="194.8" r="0.8" fill-opacity="0.55"/><circle cx="471.1" cy="238.4" r="0.7" fill-opacity="0.73"/><circle cx="637.1" cy="139.1" r="0.7" fill-opacity="0.44"/><circle cx="698.5" cy="194.0" r="0.8" fill-opacity="0.72"/><circle cx="664.9" cy="390.4" r="1.9" fill-opacity="0.38"/><circle cx="702.7" cy="394.4" r="1.9" fill-opacity="0.55"/><circle cx="670.3" cy="312.8" r="0.8" fill-opacity="0.76"/><circle cx="692.6" cy="218.2" r="1.5" fill-opacity="0.68"/><circle cx="682.4" cy="237.8" r="1.5" fill-opacity="0.54"/><circle cx="615.9" cy="460.0" r="1.9" fill-opacity="0.34"/><circle cx="766.5" cy="92.3" r="1.9" fill-opacity="0.37"/><circle cx="742.5" cy="24.0" r="1.9" fill-opacity="0.36"/><circle cx="622.7" cy="497.6" r="0.7" fill-opacity="0.72"/><circle cx="684.2" cy="107.9" r="1.5" fill-opacity="0.78"/><circle cx="445.2" cy="151.0" r="0.8" fill-opacity="0.35"/><circle cx="690.0" cy="348.5" r="0.7" fill-opacity="0.38"/><circle cx="706.9" cy="430.2" r="1.0" fill-opacity="0.77"/><circle cx="557.0" cy="271.1" r="1.9" fill-opacity="0.49"/><circle cx="747.0" cy="182.4" r="1.5" fill-opacity="0.73"/><circle cx="752.7" cy="122.4" r="0.7" fill-opacity="0.47"/><circle cx="565.8" cy="157.4" r="1.0" fill-opacity="0.53"/><circle cx="577.5" cy="168.6" r="1.9" fill-opacity="0.59"/><circle cx="409.8" cy="304.7" r="0.9" fill-opacity="0.35"/><circle cx="503.6" cy="280.1" r="0.9" fill-opacity="0.67"/><circle cx="620.0" cy="208.0" r="0.7" fill-opacity="0.70"/><circle cx="728.3" cy="386.8" r="0.8" fill-opacity="0.52"/><circle cx="577.6" cy="124.3" r="1.0" fill-opacity="0.75"/><circle cx="550.4" cy="316.8" r="0.8" fill-opacity="0.39"/><circle cx="555.6" cy="99.5" r="1.2" fill-opacity="0.72"/><circle cx="544.0" cy="179.3" r="0.9" fill-opacity="0.54"/><circle cx="427.9" cy="370.8" r="0.9" fill-opacity="0.70"/><circle cx="753.6" cy="372.7" r="1.2" fill-opacity="0.67"/><circle cx="676.3" cy="347.9" r="0.8" fill-opacity="0.59"/><circle cx="674.2" cy="121.0" r="1.9" fill-opacity="0.66"/><circle cx="713.5" cy="138.5" r="0.8" fill-opacity="0.48"/><circle cx="665.9" cy="148.7" r="1.2" fill-opacity="0.37"/><circle cx="602.6" cy="277.3" r="0.9" fill-opacity="0.70"/><circle cx="515.8" cy="444.6" r="1.2" fill-opacity="0.73"/><circle cx="573.9" cy="135.2" r="1.5" fill-opacity="0.38"/><circle cx="732.6" cy="16.7" r="1.2" fill-opacity="0.69"/><circle cx="727.7" cy="334.8" r="1.9" fill-opacity="0.48"/><circle cx="759.7" cy="149.1" r="1.0" fill-opacity="0.64"/><circle cx="667.3" cy="359.4" r="1.5" fill-opacity="0.55"/><circle cx="593.9" cy="204.2" r="0.8" fill-opacity="0.34"/><circle cx="529.3" cy="199.3" r="1.5" fill-opacity="0.67"/><circle cx="714.0" cy="317.7" r="1.2" fill-opacity="0.78"/></g><g stroke="#2f66a3" stroke-opacity="0.5" stroke-width="0.6" fill="none"><path d="M363.8 102.6L415.6 123M384.8 89.4L424 111M359 345L388 332M372 368L390 361M364 102L388 92"/></g><g fill="#3f7fc0" fill-opacity="0.85"><circle cx="363.8" cy="102.6" r="2.2"/><circle cx="384.8" cy="89.4" r="1.6"/><circle cx="424" cy="111" r="1.5"/><circle cx="359" cy="345" r="1.6"/><circle cx="372" cy="368" r="1.6"/><circle cx="385" cy="397" r="1.4"/><circle cx="428" cy="456" r="2.2"/><circle cx="454" cy="458" r="1.8"/><circle cx="569" cy="462" r="1.8"/></g></svg>

<!-- header icons -->
<svg class="a" style="left:5.8px;top:15.7px" width="9.6" height="9.6" viewBox="0 0 10 10" fill="#dfe6ee"><circle cx="1.1" cy="1.1" r="1.05"/><circle cx="5" cy="1.1" r="1.05"/><circle cx="8.9" cy="1.1" r="1.05"/><circle cx="1.1" cy="5" r="1.05"/><circle cx="5" cy="5" r="1.05"/><circle cx="8.9" cy="5" r="1.05"/><circle cx="1.1" cy="8.9" r="1.05"/><circle cx="5" cy="8.9" r="1.05"/><circle cx="8.9" cy="8.9" r="1.05"/></svg>
<svg class="a" style="left:22.4px;top:13.4px" width="13.4" height="12.4" viewBox="0 0 13 12.4"><ellipse cx="7.2" cy="6.2" rx="5.6" ry="6" fill="#fff"/><path d="M4.6 0.9 C1.2 2.6 0.6 8.6 4.2 11.6 C2.6 8.6 2.8 3.6 4.6 0.9Z" fill="#fff"/><path d="M6.2 1.2 C3.8 3.6 3.6 8.8 5.8 11.4" stroke="#05162d" stroke-width="0.9" fill="none"/><path d="M8.2 1.6 C6.2 4 6 8.4 7.6 11" stroke="#05162d" stroke-width="0.5" fill="none" opacity=".6"/></svg>

<div class="a" style="left:528.2px;top:9.3px;width:64.3px;height:21.7px;border-radius:11px;background:#1e2f47"></div>
<svg class="a" style="left:533.6px;top:14.6px" width="10" height="10.6" viewBox="0 0 10 10.6"><path d="M5 0.5 A4.9 4.9 0 1 0 9.6 7 A4.6 4.6 0 0 1 5 0.5Z" fill="#fff"/></svg>
<div class="a" style="left:548.1px;top:13.2px;width:23.6px;height:13.6px;border-radius:7px;border:0.8px solid #a3adba;background:#0d1e35"></div>
<div class="a" style="left:551.2px;top:16.5px;width:7.1px;height:7.1px;border-radius:50%;background:#eef0f3"></div>
<svg class="a" style="left:577.1px;top:15.6px" width="10" height="10" viewBox="0 0 11 11" stroke="#7f8da0" fill="none" stroke-width="0.8"><circle cx="5.5" cy="5.5" r="2.1"/><path d="M5.5 0.4v1.7M5.5 8.9v1.7M0.4 5.5h1.7M8.9 5.5h1.7M1.9 1.9l1.2 1.2M7.9 7.9l1.2 1.2M1.9 9.1l1.2-1.2M7.9 3.1l1.2-1.2"/></svg>

<div class="a" style="left:642.4px;top:12px;width:11.5px;height:8.2px;border-radius:4.1px;background:#d43a33"></div>
<div class="t" style="left:642.4px;top:13.7px;width:11.5px;text-align:center;font-size:5px;color:#fff;letter-spacing:-0.15px">120</div>
<svg class="a" style="left:701.6px;top:18.5px" width="11" height="6.5" viewBox="0 0 11 6.5"><path d="M0.8 0.9 L5.5 5.4 L10.2 0.9" stroke="#e8edf3" stroke-width="1.2" fill="none"/></svg>
<svg class="a" style="left:728.5px;top:14.6px" width="10" height="11.6" viewBox="0 0 10 11.6"><path d="M5 0.9 C2.9 0.9 2 2.7 2 4.6 V6.9 L0.9 8.5 H9.1 L8 6.9 V4.6 C8 2.7 7.1 0.9 5 0.9Z M3.9 9.6 A1.2 1.2 0 0 0 6.1 9.6" stroke="#e8edf3" stroke-width="0.95" fill="none" stroke-linejoin="round"/></svg>
<svg class="a" style="left:757.8px;top:13.8px" width="4" height="13.4" viewBox="0 0 4 13.4" fill="#fff"><circle cx="2" cy="1.7" r="1.5"/><circle cx="2" cy="6.7" r="1.5"/><circle cx="2" cy="11.7" r="1.5"/></svg>

<!-- nav -->
<div class="a" style="left:4.2px;top:60.6px;width:23px;height:2.4px;background:#d0413c"></div>
<div class="a" style="left:0;top:62.6px;width:772px;height:1px;background:#23354c"></div>
<div class="a" style="left:4.2px;top:60.6px;width:23px;height:2.4px;background:#d0413c"></div>

<!-- search -->
<div class="a" style="left:72.8px;top:124.8px;width:625.6px;height:34.4px;border-radius:4px;background:#fff"></div>
<div class="a" style="left:653.6px;top:124.8px;width:44.8px;height:34.4px;border-radius:0 4px 4px 0;background:linear-gradient(90deg,#2153a4,#3367b3)"></div>
<svg class="a" style="left:666px;top:132px" width="20" height="20" viewBox="0 0 20 20"><circle cx="7.8" cy="7.9" r="5.4" stroke="#fff" stroke-width="1.5" fill="none"/><path d="M11.8 11.9 L18.2 18.2" stroke="#fff" stroke-width="1.7" stroke-linecap="round"/></svg>
<div class="pill" style="left:403.9px;top:131.2px;width:115.8px"></div>
<svg class="a" style="left:497.7px;top:139.7px" width="8" height="5.4" viewBox="0 0 8 5.4"><path d="M0.7 0.8 L4 4.2 L7.3 0.8" stroke="#2a4f94" stroke-width="1.1" fill="none"/></svg>
<div class="pill" style="left:527.9px;top:131.2px;width:120.1px"></div>
<svg class="a" style="left:626.3px;top:139.7px" width="8" height="5.4" viewBox="0 0 8 5.4"><path d="M0.7 0.8 L4 4.2 L7.3 0.8" stroke="#2a4f94" stroke-width="1.1" fill="none"/></svg>

<!-- Dossier -->
<div class="panel" style="left:73.2px;top:194.6px;width:307.8px;height:143.8px"></div>
<div class="bar" style="left:73.2px;top:208.7px"></div>
<svg class="a" style="left:88.4px;top:213.8px" width="10" height="6.4" viewBox="0 0 10 6.4"><path d="M0.9 5.6 L5 1.4 L9.1 5.6" stroke="#fff" stroke-width="1.3" fill="none"/></svg>
<div class="hr" style="left:73.2px;top:236.4px;width:307.8px"></div>

<!-- History -->
<div class="panel" style="left:391.2px;top:194.6px;width:307.6px;height:255.4px"></div>
<div class="bar" style="left:391.2px;top:208.7px"></div>
<svg class="a" style="left:406.4px;top:213.4px" width="10" height="6.4" viewBox="0 0 10 6.4"><path d="M0.9 5.6 L5 1.4 L9.1 5.6" stroke="#fff" stroke-width="1.3" fill="none"/></svg>
<div class="hr" style="left:391.2px;top:236.6px;width:307.6px"></div>
<div class="a" style="left:407.8px;top:268px;width:275.6px;height:1.6px;background:#2b3c53"></div>
<div class="a" style="left:407.8px;top:267.2px;width:86px;height:2.4px;background:#cb403b"></div>
<svg class="a" style="left:412.2px;top:434.2px" width="7.8" height="6.8" viewBox="0 0 7.8 6.8" fill="#93a0b0"><rect x="0" y="0" width="1.3" height="1.2"/><rect x="2.5" y="0.1" width="5.3" height="1"/><rect x="0" y="2.8" width="1.3" height="1.2"/><rect x="2.5" y="2.9" width="5.3" height="1"/><rect x="0" y="5.6" width="1.3" height="1.2"/><rect x="2.5" y="5.7" width="5.3" height="1"/></svg>

<!-- Alerts -->
<div class="panel" style="left:73.2px;top:418.4px;width:307.8px;height:90px"></div>
<div class="bar" style="left:73.2px;top:432.2px"></div>
<svg class="a" style="left:88.6px;top:436.8px" width="10" height="6.4" viewBox="0 0 10 6.4"><path d="M0.9 5.6 L5 1.4 L9.1 5.6" stroke="#fff" stroke-width="1.3" fill="none"/></svg>
<div class="hr" style="left:73.2px;top:459.8px;width:307.8px"></div>

<!-- Folders -->
<div class="panel" style="left:391.2px;top:470.2px;width:307.6px;height:40px"></div>
<div class="bar" style="left:391.2px;top:483.6px;height:17px"></div>
<svg class="a" style="left:406.6px;top:488px" width="10" height="6.4" viewBox="0 0 10 6.4"><path d="M0.9 5.6 L5 1.4 L9.1 5.6" stroke="#fff" stroke-width="1.3" fill="none"/></svg>

<!-- help -->
<div class="a" style="left:734.2px;top:445px;width:30.4px;height:30.4px;border-radius:50%;background:#1c2a42;border:1px solid #3c4759"></div>
<div class="t" style="left:739.5px;top:449.6px;width:20px;text-align:center;font-size:22px;font-weight:bold;color:#fff;transform-origin:50% 50%;transform:scaleX(0.74)">?</div>
<div class="a" style="left:725.4px;top:441.8px;width:17.4px;height:17.4px;border-radius:50%;background:#4888c4;border:2px solid #2a5c92"></div>
<div class="t" style="left:725.9px;top:448px;width:17.4px;text-align:center;font-size:7px;color:#eaf2fa;padding-left:3px">3</div>

<div class="t" style="left:38.8px;top:12px;font-size:13px;color:#fff;font-weight:bold;transform:translateY(0.48px) scale(0.945,1.097)">Nexis</div>
<div class="t" style="left:71.9px;top:14px;font-size:4px;color:#fff;transform:translateY(0.68px) scale(0.914,0.955)">®</div>
<div class="t" style="left:614.3px;top:15px;font-size:9px;color:#fff;transform:translateY(0.53px) scale(0.920,1.118)">Folders</div>
<div class="t" style="left:666.9px;top:15px;font-size:9px;color:#fff;transform:translateY(0.53px) scale(0.992,1.118)">History</div>
<div class="t" style="left:4.3px;top:47px;font-size:9px;color:#fff;font-weight:bold;transform:translateY(0.13px) scale(0.915,1.075)">Home</div>
<div class="t" style="left:44.9px;top:47px;font-size:9px;color:#e6ebf1;transform:translateY(0.13px) scale(0.904,1.075)">Power Search</div>
<div class="t" style="left:113.7px;top:47px;font-size:9px;color:#e6ebf1;transform:translateY(0.13px) scale(0.933,1.075)">News</div>
<div class="t" style="left:152.3px;top:47px;font-size:9px;color:#e6ebf1;transform:translateY(0.13px) scale(0.916,1.075)">Companies</div>
<div class="t" style="left:211.6px;top:47px;font-size:9px;color:#e6ebf1;transform:translateY(0.13px) scale(0.968,1.075)">Market Insight</div>
<div class="t" style="left:283.9px;top:47px;font-size:9px;color:#e6ebf1;transform:translateY(0.13px) scale(0.930,1.075)">Biographies</div>
<div class="t" style="left:345.5px;top:47px;font-size:9px;color:#e6ebf1;transform:translateY(0.13px) scale(0.894,1.075)">Legal</div>
<div class="t" style="left:382.5px;top:47px;font-size:9px;color:#e6ebf1;transform:translateY(0.13px) scale(0.899,1.075)">Sources</div>
<div class="t" style="left:87.1px;top:138px;font-size:10px;color:#adb2b9;font-style:italic;transform:translateY(0.39px) scale(0.866,0.896)">Enter terms, sources, companies, or citations</div>
<div class="t" style="left:418.4px;top:138px;font-size:10px;color:#25478c;font-weight:bold;transform:translateY(0.39px) scale(0.888,0.896)">Previous 2 Years</div>
<div class="t" style="left:541.7px;top:138px;font-size:10px;color:#25478c;font-weight:bold;transform:translateY(0.39px) scale(0.902,0.896)">All Content Types</div>
<div class="t" style="left:82.0px;top:166px;font-size:7.75px;color:#e4e9ef;transform:translateY(0.69px) scale(0.935,1.111)">Recents &amp; Favorites</div>
<div class="t" style="left:173.2px;top:166px;font-size:7.75px;color:#e4e9ef;transform:translateY(0.69px) scale(0.925,1.111)">Advanced Search</div>
<div class="t" style="left:255.9px;top:166px;font-size:7.75px;color:#e4e9ef;transform:translateY(0.69px) scale(0.911,1.111)">Search Tips</div>
<div class="t" style="left:108.5px;top:210px;font-size:12px;color:#fff;font-weight:bold;transform:translateY(0.50px) scale(0.870,0.955)">Dossier</div>
<div class="t" style="left:89.1px;top:252px;font-size:9px;color:#b4bcc8;transform:translateY(0.63px) scale(0.905,1.075)">Find a Company</div>
<div class="t" style="left:89.1px;top:273px;font-size:9px;color:#b4bcc8;transform:translateY(0.23px) scale(0.917,1.075)">Create a Company List</div>
<div class="t" style="left:89.1px;top:293px;font-size:9px;color:#b4bcc8;transform:translateY(0.53px) scale(0.910,1.075)">Find an Executive</div>
<div class="t" style="left:89.1px;top:313px;font-size:9px;color:#b4bcc8;transform:translateY(0.93px) scale(0.921,1.075)">Create an Executive List</div>
<div class="t" style="left:428.6px;top:210px;font-size:12px;color:#fff;font-weight:bold;transform:translateY(0.11px) scale(0.926,0.994)">History</div>
<div class="t" style="left:441.6px;top:248px;font-size:9px;color:#fff;font-weight:bold;transform:translateY(0.03px) scale(0.854,1.075)">Searches</div>
<div class="t" style="left:528.0px;top:248px;font-size:9px;color:#fff;font-weight:bold;transform:translateY(0.03px) scale(0.898,1.075)">Documents</div>
<div class="t" style="left:623.8px;top:248px;font-size:9px;color:#fff;font-weight:bold;font-style:italic;transform:translateY(0.03px) scale(0.827,1.075)">Shepard's®</div>
<div class="t" style="left:412.4px;top:275px;font-size:9px;color:#b4bcc8;transform:translateY(0.13px) scale(0.939,1.075)">age discrimination and front pay</div>
<div class="t" style="left:412.4px;top:306px;font-size:9px;color:#b4bcc8;transform:translateY(0.18px) scale(0.914,1.075)">horses</div>
<div class="t" style="left:412.4px;top:337px;font-size:9px;color:#b4bcc8;transform:translateY(0.23px) scale(0.965,1.075)">alternative dispute</div>
<div class="t" style="left:412.4px;top:368px;font-size:9px;color:#b4bcc8;transform:translateY(0.28px) scale(0.965,1.075)">alternative dispute</div>
<div class="t" style="left:412.1px;top:399px;font-size:9px;color:#b4bcc8;transform:translateY(0.73px) scale(0.953,1.075)">Dog Bite</div>
<div class="t" style="left:412.4px;top:288px;font-size:7.5px;color:#7f8b9b;transform:translateY(0.60px) scale(0.930,1.075)">Legal Search</div>
<div class="t" style="left:412.4px;top:319px;font-size:7.5px;color:#7f8b9b;transform:translateY(0.70px) scale(0.930,1.075)">Legal Search</div>
<div class="t" style="left:412.4px;top:350px;font-size:7.5px;color:#7f8b9b;transform:translateY(0.75px) scale(0.930,1.075)">Legal Search</div>
<div class="t" style="left:412.4px;top:381px;font-size:7.5px;color:#7f8b9b;transform:translateY(0.80px) scale(0.930,1.075)">Legal Search</div>
<div class="t" style="left:412.4px;top:413px;font-size:7.5px;color:#7f8b9b;transform:translateY(0.10px) scale(0.930,1.075)">Legal Search</div>
<div class="t" style="left:426.5px;top:433px;font-size:9px;color:#dfe5ec;font-weight:bold;transform:translateY(0.03px) scale(0.906,1.075)">View all history</div>
<div class="t" style="left:110.0px;top:433px;font-size:12px;color:#fff;font-weight:bold;transform:translateY(0.90px) scale(0.938,0.955)">Alerts</div>
<div class="t" style="left:84.1px;top:473px;font-size:9px;color:#e4e9ef;transform:translateY(0.93px) scale(0.920,1.075)">You have not created any alerts.</div>
<div class="t" style="left:84.1px;top:488px;font-size:9px;color:#e4e9ef;transform:translateY(0.53px) scale(0.930,1.075)">See <span style="color:#8d99a8">Help</span> to find out how to create an alert.</div>
<div class="t" style="left:428.7px;top:485px;font-size:12px;color:#fff;font-weight:bold;transform:translateY(0.21px) scale(0.872,0.994)">Folders</div>
</div>
</body></html>
